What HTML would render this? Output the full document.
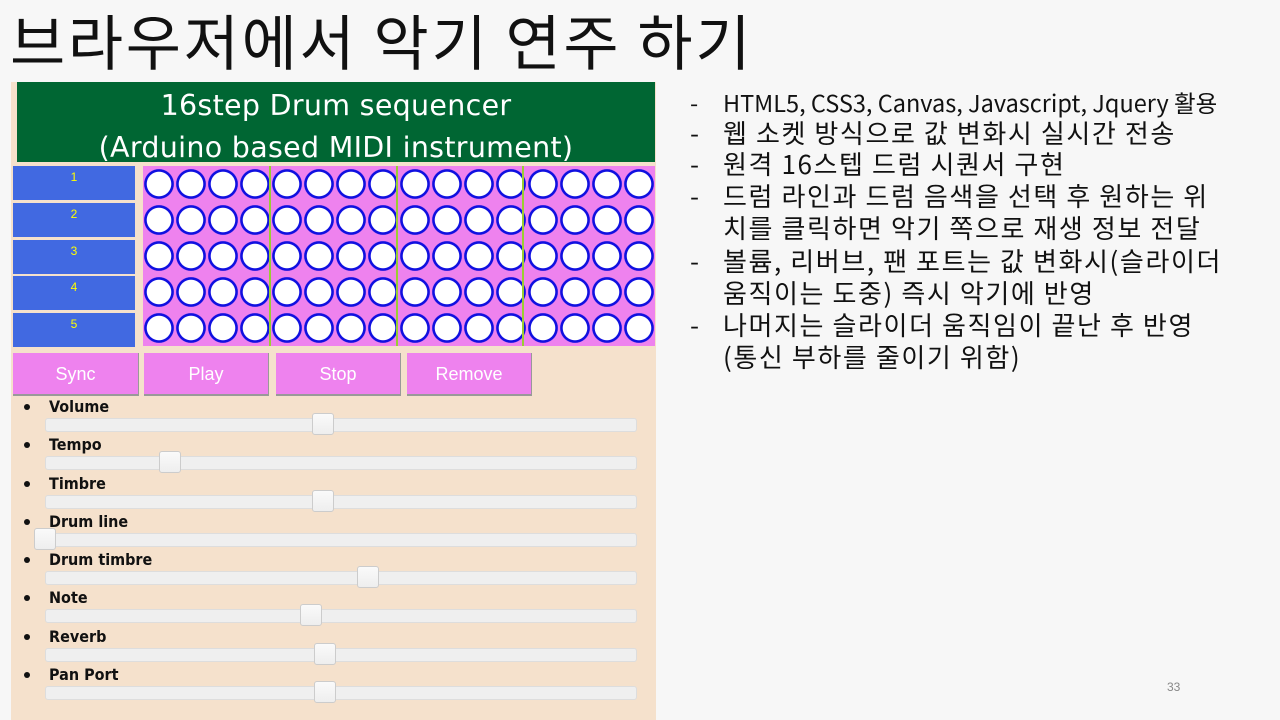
<!DOCTYPE html><html><head><meta charset="utf-8"><style>
body{margin:0;width:1280px;height:720px;background:#f7f7f7;position:relative;overflow:hidden;font-family:"Liberation Sans","Noto Sans CJK KR",sans-serif}
.a{position:absolute}
h1{position:absolute;left:10px;top:-2px;margin:0;font-weight:normal;font-size:60px;line-height:84px;color:#111;font-family:"Noto Sans CJK KR",sans-serif;letter-spacing:2.7px}
.panel{left:11px;top:82px;width:645px;height:638px;background:#f5e1cc}
.hdr{left:17px;top:82px;width:638px;height:80px;background:#006633;color:#fff;text-align:center;font-size:28.5px;line-height:42px;padding-top:3px;box-sizing:border-box;font-family:"DejaVu Sans",sans-serif;letter-spacing:0.3px}
.ln{left:13px;width:122px;height:34px;background:#4169e1;color:#ff0;text-align:center;font-size:12px;line-height:22px}
.grid{left:143px;top:166px;width:512px;height:180px;background-color:#ee82ee;background-image:radial-gradient(circle at 16px 18px,#fff 0,#fff 12px,#1010e0 12.5px,#1010e0 14.5px,rgba(238,130,238,0) 15.2px);background-size:32px 36px}
.sep{top:166px;width:2px;height:180px;background:#9acd32}
.btn{top:353px;height:43px;background:#ee82ee;color:#fff;text-align:center;font-size:18px;line-height:42px;border-bottom:2px solid #999;border-right:1px solid #999;box-sizing:border-box}
.lbl{left:49px;font-size:16px;font-weight:bold;color:#111;font-family:"DejaVu Sans Condensed","Liberation Sans",sans-serif}
.dot{left:24px;width:6px;height:6px;border-radius:3px;background:#111}
.tr{left:45px;width:592px;height:14px;background:#efefef;border:1px solid #ddd;border-radius:3px;box-sizing:border-box}
.th{width:22px;height:22px;background:linear-gradient(#fafafa,#eee);border:1px solid #ccc;border-radius:3px;box-sizing:border-box}
.r{left:690px;font-size:26px;color:#111;font-family:"Noto Sans CJK KR",sans-serif;line-height:32px;white-space:nowrap;letter-spacing:1.6px}
.r b{font-weight:normal;display:inline-block;width:33px;letter-spacing:0}
</style></head><body>
<h1>브라우저에서 악기 연주 하기</h1>
<div class="a panel"></div>
<div class="a hdr">16step Drum sequencer<br>(Arduino based MIDI instrument)</div>
<div class="a ln" style="top:166px">1</div>
<div class="a ln" style="top:203px">2</div>
<div class="a ln" style="top:240px">3</div>
<div class="a ln" style="top:276px">4</div>
<div class="a ln" style="top:313px">5</div>
<div class="a grid"></div>
<div class="a sep" style="left:269px"></div>
<div class="a sep" style="left:396px"></div>
<div class="a sep" style="left:522px"></div>
<div class="a btn" style="left:13px;width:126px">Sync</div>
<div class="a btn" style="left:144px;width:125px">Play</div>
<div class="a btn" style="left:276px;width:125px">Stop</div>
<div class="a btn" style="left:407px;width:125px">Remove</div>

<div class="a dot" style="top:404px"></div><div class="a lbl" style="top:397px">Volume</div><div class="a tr" style="top:418px"></div><div class="a th" style="left:312px;top:413px"></div>
<div class="a dot" style="top:442px"></div><div class="a lbl" style="top:435px">Tempo</div><div class="a tr" style="top:456px"></div><div class="a th" style="left:159px;top:451px"></div>
<div class="a dot" style="top:481px"></div><div class="a lbl" style="top:474px">Timbre</div><div class="a tr" style="top:495px"></div><div class="a th" style="left:312px;top:490px"></div>
<div class="a dot" style="top:519px"></div><div class="a lbl" style="top:512px">Drum line</div><div class="a tr" style="top:533px"></div><div class="a th" style="left:34px;top:528px"></div>
<div class="a dot" style="top:557px"></div><div class="a lbl" style="top:550px">Drum timbre</div><div class="a tr" style="top:571px"></div><div class="a th" style="left:357px;top:566px"></div>
<div class="a dot" style="top:595px"></div><div class="a lbl" style="top:588px">Note</div><div class="a tr" style="top:609px"></div><div class="a th" style="left:300px;top:604px"></div>
<div class="a dot" style="top:634px"></div><div class="a lbl" style="top:627px">Reverb</div><div class="a tr" style="top:648px"></div><div class="a th" style="left:314px;top:643px"></div>
<div class="a dot" style="top:672px"></div><div class="a lbl" style="top:665px">Pan Port</div><div class="a tr" style="top:686px"></div><div class="a th" style="left:314px;top:681px"></div>

<div class="a r" style="top:86px;font-size:23.5px;letter-spacing:0"><b>-</b>HTML5, CSS3, Canvas, Javascript, Jquery 활용</div>
<div class="a r" style="top:117px"><b>-</b>웹 소켓 방식으로 값 변화시 실시간 전송</div>
<div class="a r" style="top:148px"><b>-</b>원격 16스텝 드럼 시퀀서 구현</div>
<div class="a r" style="top:180px"><b>-</b>드럼 라인과 드럼 음색을 선택 후 원하는 위</div>
<div class="a r" style="top:212px;left:723px">치를 클릭하면 악기 쪽으로 재생 정보 전달</div>
<div class="a r" style="top:245px"><b>-</b>볼륨, 리버브, 팬 포트는 값 변화시(슬라이더</div>
<div class="a r" style="top:277px;left:723px">움직이는 도중) 즉시 악기에 반영</div>
<div class="a r" style="top:309px"><b>-</b>나머지는 슬라이더 움직임이 끝난 후 반영</div>
<div class="a r" style="top:341px;left:723px">(통신 부하를 줄이기 위함)</div>
<div class="a" style="left:1167px;top:680px;font-size:12px;color:#888">33</div>
</body></html>
